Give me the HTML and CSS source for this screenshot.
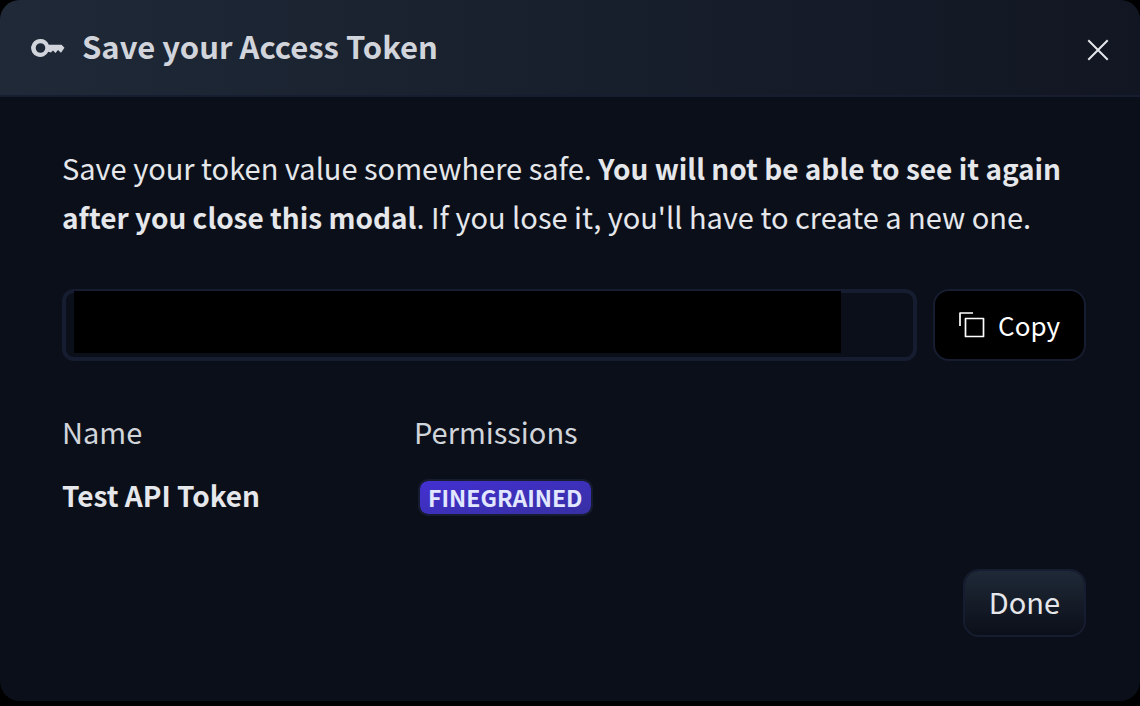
FILE: index.html
```html
<!DOCTYPE html>
<html lang="en">
<head>
<meta charset="utf-8">
<meta name="viewport" content="width=device-width, initial-scale=1">
<title>Save your Access Token</title>
<link rel="stylesheet" href="styles.css">
</head>
<body>
<main class="modal" role="dialog" aria-labelledby="modal-title">
  <header class="modal-header">
    <svg class="key-icon" viewBox="0 0 34 20" aria-hidden="true">
      <path fill="currentColor" fill-rule="evenodd" d="M9.500 1a9 9 0 0 1 8.300 5.700H30.500l3 3-3.500 5-3-2.700-2.500 3-2.500-2.500-2.200 2-2.500-.8A9 9 0 1 1 9.500 1zm0 4.200a4.800 4.800 0 1 0 0 9.600 4.800 4.800 0 0 0 0-9.600z"/>
    </svg>
    <h1 class="modal-title" id="modal-title">Save your Access Token</h1>
    <button class="close-button" type="button" aria-label="Close">
      <svg class="close-icon" viewBox="0 0 22 22" aria-hidden="true">
        <path d="M2 2l18 18M20 2L2 20" fill="none" stroke="currentColor" stroke-width="2" stroke-linecap="square"/>
      </svg>
    </button>
  </header>
  <div class="modal-body">
    <p class="notice">Save your token value somewhere safe. <strong class="notice-strong">You will not be able to see it again after you close this modal</strong>. If you lose it, you'll have to create a new one.</p>
    <div class="token-row">
      <div class="token-field">
        <input class="token-input" type="text" aria-label="Access token" readonly>
        <span class="token-mask"></span>
      </div>
      <button class="copy-button" type="button">
        <svg class="copy-icon" viewBox="0 0 26 26" aria-hidden="true">
          <path d="M1 14V1h13M6.500 6.500h18v18h-18z" fill="none" stroke="currentColor" stroke-width="1.700" stroke-linejoin="round"/>
        </svg>
        Copy
      </button>
    </div>
    <table class="token-table">
      <thead>
        <tr><th class="name-column" scope="col">Name</th><th scope="col">Permissions</th></tr>
      </thead>
      <tbody>
        <tr><td class="token-name">Test API Token</td><td><span class="badge">FINEGRAINED</span></td></tr>
      </tbody>
    </table>
    <div class="actions">
      <button class="done-button" type="button">Done</button>
    </div>
  </div>
</main>
</body>
</html>
```

FILE: styles.css
```css
* {
  box-sizing: border-box;
}

body {
  margin: 0;
  background: #000;
  color: #e5e7eb;
  font-family: "Source Sans Pro", "Noto Sans CJK SC", sans-serif;
  font-size: 29px;
  line-height: 48px;
}

button,
input {
  font: inherit;
  color: inherit;
}

.modal {
  overflow: hidden;
  border-radius: 20px;
  background: #0b0f19;
}

.modal-header {
  display: flex;
  align-items: center;
  height: 97px;
  padding: 0 31px;
  border-bottom: 2px solid #171d30;
  background: linear-gradient(to right, #1f2937, #111622);
  color: #d1d5db;
}

.key-icon {
  width: 34px;
  height: 20px;
  margin-right: 17px;
}

.modal-title {
  flex: 1;
  margin: 0;
  padding-bottom: 4px;
  font-size: 31px;
  font-weight: 600;
}

.close-button {
  display: flex;
  padding: 4px 0 0;
  border: 0;
  background: none;
  color: #e5e7eb;
}

.close-icon {
  width: 22px;
  height: 22px;
}

.modal-body {
  padding: 46px 54px 64px 62px;
}

.notice {
  margin: 0 0 48px;
}

.notice-strong {
  font-size: 28px;
  font-weight: 700;
}

.token-row {
  display: flex;
  gap: 16px;
  margin-bottom: 46px;
}

.token-field {
  position: relative;
  flex: 1;
}

.token-input {
  display: block;
  width: 100%;
  height: 72px;
  border: 4px solid #171d30;
  border-radius: 12px;
  background: #0b0f19;
}

.token-mask {
  position: absolute;
  top: 2px;
  bottom: 8px;
  left: 12px;
  right: 76px;
  background: #000;
}

.copy-button {
  display: flex;
  align-items: center;
  gap: 13px;
  height: 72px;
  padding: 0 24px;
  border: 2px solid #171d30;
  border-radius: 16px;
  background: #000;
  color: #fff;
  font-size: 26px;
}

.copy-icon {
  width: 26px;
  height: 26px;
}

.token-table {
  width: 100%;
  margin-bottom: 34px;
  border-collapse: collapse;
  table-layout: fixed;
}

.token-table th,
.token-table td {
  padding: 0 0 16px;
  text-align: left;
}

.token-table th {
  color: #d1d5db;
  font-weight: 400;
}

.token-table .name-column {
  width: 352px;
}

.token-name {
  font-size: 28px;
  font-weight: 600;
}

.badge {
  display: block;
  width: fit-content;
  margin-top: 4px;
  margin-left: 4px;
  padding: 0 8px;
  border: 2px solid #171d30;
  border-radius: 10px;
  background: linear-gradient(to bottom right, #4330d2, #3730a3) padding-box;
  color: #e0e7ff;
  font-size: 23px;
  font-weight: 700;
  line-height: 33px;
}

.actions {
  display: flex;
  justify-content: flex-end;
}

.done-button {
  height: 68px;
  padding: 0 24px 4px;
  border: 2px solid #171d30;
  border-radius: 16px;
  background: linear-gradient(to bottom, #1f2937, #0b0f19) padding-box;
}
```
